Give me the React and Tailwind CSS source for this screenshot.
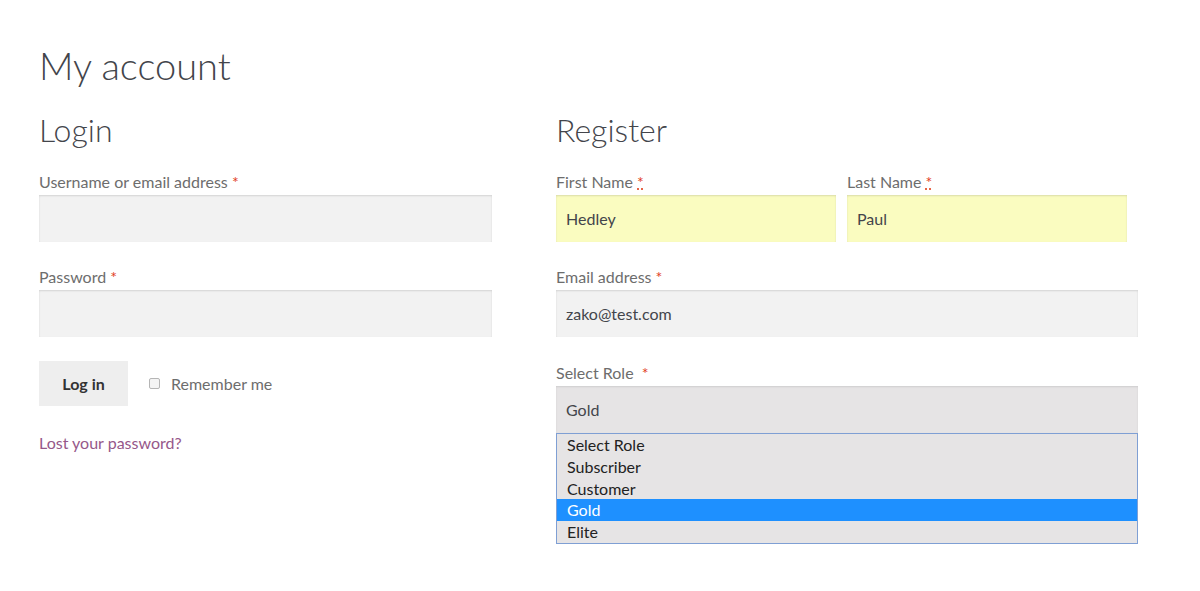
import { useState } from "react";

const font = { fontFamily: "Lato, 'Liberation Sans', sans-serif" };

const Req = ({ abbr = false }) =>
  abbr ? (
    <abbr className="text-[#e2401c] underline decoration-dotted" title="required">
      *
    </abbr>
  ) : (
    <span className="text-[#e2401c]">*</span>
  );

const Field = ({ label, value = "", bg = "bg-[#f2f2f2]", className = "" }) => (
  <div className={className}>
    <div className="text-[16px] leading-[20px] text-[#6d6d6d]">{label}</div>
    <div
      className={`mt-[3px] h-[47px] ${bg} shadow-[inset_0_1px_2px_rgba(0,0,0,0.13)] px-[10px] flex items-center text-[16px] text-[#43454b]`}
    >
      {value}
    </div>
  </div>
);

export default function App() {
  const [role] = useState("Gold");
  const roles = ["Select Role", "Subscriber", "Customer", "Gold", "Elite"];

  return (
    <div className="w-[1200px] h-[591px] bg-white text-[#43454b]" style={font}>
      <div className="pl-[39px] pt-[38px]">
        <h1 className="text-[38px] leading-[54px] font-light text-[#43454b]">My account</h1>

        <div className="mt-[18px] flex gap-[64px]">
          {/* Login */}
          <div className="w-[453px]">
            <h2 className="text-[32px] leading-[40px] font-light">Login</h2>
            <Field className="mt-[22px]" label={<>Username or email address <Req /></>} />
            <Field className="mt-[25px]" label={<>Password <Req /></>} />
            <div className="mt-[24px] flex items-center">
              <button className="w-[89px] h-[45px] bg-[#eeeeee] text-[16px] font-bold text-[#333333]">
                Log in
              </button>
              <span className="ml-[21px] w-[11px] h-[11px] rounded-[2px] border border-[#b5b5b5] bg-[#f4f4f4]"></span>
              <span className="ml-[11px] text-[16px] text-[#6d6d6d]">Remember me</span>
            </div>
            <div className="mt-[27px] text-[16px] leading-[20px] text-[#96588a]">Lost your password?</div>
          </div>

          {/* Register */}
          <div className="w-[582px]">
            <h2 className="text-[32px] leading-[40px] font-light">Register</h2>
            <div className="mt-[22px] flex gap-[11px]">
              <Field
                className="w-[280px]"
                label={<>First Name <Req abbr /></>}
                value="Hedley"
                bg="bg-[#fafcc0]"
              />
              <Field
                className="w-[280px]"
                label={<>Last Name <Req abbr /></>}
                value="Paul"
                bg="bg-[#fafcc0]"
              />
            </div>
            <Field className="mt-[25px]" label={<>Email address <Req /></>} value="zako@test.com" />
            <div className="mt-[26px]">
              <div className="text-[16px] leading-[20px] text-[#6d6d6d]">
                Select Role&nbsp; <Req />
              </div>
              <div className="mt-[3px] h-[47px] bg-[#e6e4e5] shadow-[inset_0_1px_2px_rgba(0,0,0,0.1)] px-[10px] flex items-center text-[16px] text-[#43454b]">
                {role}
              </div>
              <div className="border border-[#7f9fd4] bg-[#e6e4e5]">
                {roles.map((r) => (
                  <div
                    key={r}
                    className={`h-[21.8px] leading-[21.8px] px-[10px] text-[16px] ${
                      r === role ? "bg-[#1e90ff] text-white" : "text-[#222222]"
                    }`}
                  >
                    {r}
                  </div>
                ))}
              </div>
            </div>
          </div>
        </div>
      </div>
    </div>
  );
}
